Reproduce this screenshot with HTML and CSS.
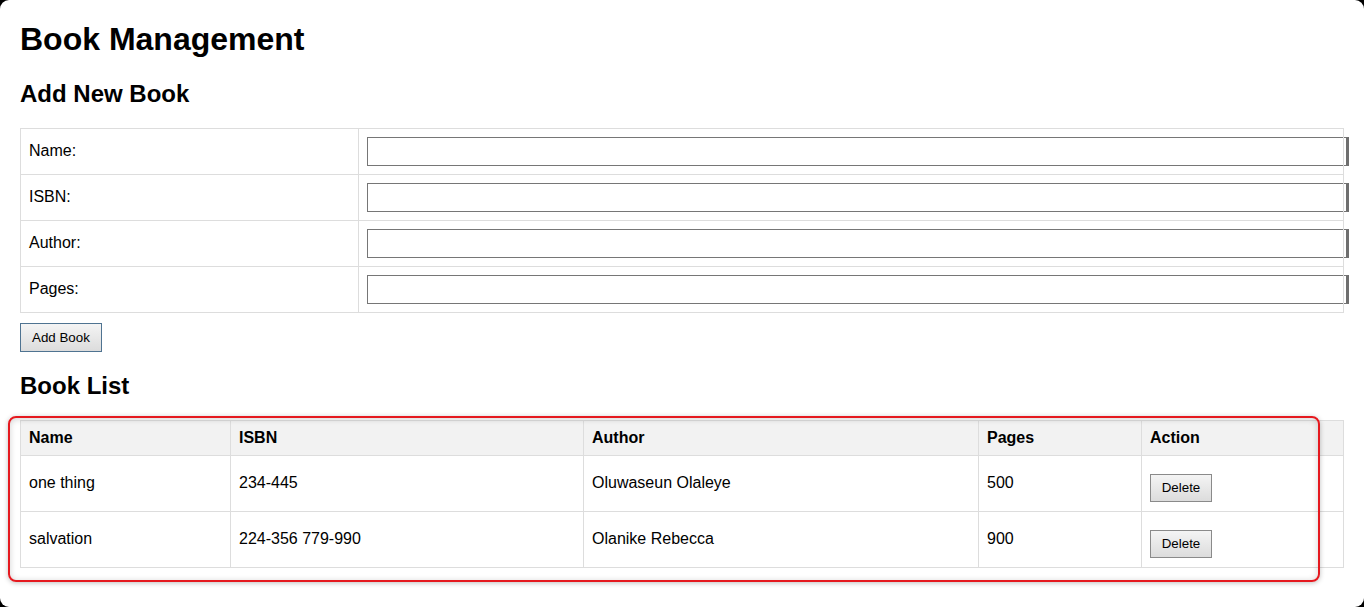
FILE: index.html
```html
<!DOCTYPE html>
<html lang="en">
<head>
<meta charset="utf-8">
<title>Book Management</title>
<link rel="stylesheet" href="styles.css">
</head>
<body>
<h1 class="page-title">Book Management</h1>

<h2 class="section-title">Add New Book</h2>
<form class="book-form">
  <table class="form-table">
    <colgroup>
      <col class="col-label">
      <col class="col-input">
    </colgroup>
    <tr>
      <td class="cell"><label for="name">Name:</label></td>
      <td class="cell"><input class="text-input" id="name" type="text"></td>
    </tr>
    <tr>
      <td class="cell"><label for="isbn">ISBN:</label></td>
      <td class="cell"><input class="text-input" id="isbn" type="text"></td>
    </tr>
    <tr>
      <td class="cell"><label for="author">Author:</label></td>
      <td class="cell"><input class="text-input" id="author" type="text"></td>
    </tr>
    <tr>
      <td class="cell"><label for="pages">Pages:</label></td>
      <td class="cell"><input class="text-input" id="pages" type="text"></td>
    </tr>
  </table>
  <button class="btn btn-add" type="button">Add Book</button>
</form>

<h2 class="section-title">Book List</h2>
<div class="list-wrap">
  <table class="book-table">
    <colgroup>
      <col class="col-name">
      <col class="col-isbn">
      <col class="col-author">
      <col class="col-pages">
      <col class="col-action">
    </colgroup>
    <thead>
      <tr>
        <th class="head-cell">Name</th>
        <th class="head-cell">ISBN</th>
        <th class="head-cell">Author</th>
        <th class="head-cell">Pages</th>
        <th class="head-cell">Action</th>
      </tr>
    </thead>
    <tbody>
      <tr>
        <td class="body-cell">one thing</td>
        <td class="body-cell">234-445</td>
        <td class="body-cell">Oluwaseun Olaleye</td>
        <td class="body-cell">500</td>
        <td class="body-cell"><button class="btn btn-delete" type="button">Delete</button></td>
      </tr>
      <tr>
        <td class="body-cell">salvation</td>
        <td class="body-cell">224-356 779-990</td>
        <td class="body-cell">Olanike Rebecca</td>
        <td class="body-cell">900</td>
        <td class="body-cell"><button class="btn btn-delete" type="button">Delete</button></td>
      </tr>
    </tbody>
  </table>
  <div class="highlight"></div>
</div>

<div class="window-frame"></div>
</body>
</html>
```

FILE: styles.css
```css
html {
  background: #ffffff;
}

body {
  margin: 0;
  padding: 0 20px 20px;
  font-family: "Liberation Sans", Arial, sans-serif;
  font-size: 16px;
  color: #000;
  background: #ffffff;
}

.page-title {
  font-size: 32px;
  font-weight: bold;
  margin: 21.44px 0;
}

.section-title {
  font-size: 24px;
  font-weight: bold;
  margin: 19.92px 0;
}

.book-form {
  margin: 0;
}

.form-table,
.book-table {
  width: 100%;
  border-collapse: collapse;
  table-layout: fixed;
}

.col-label { width: 338px; }

.cell {
  border: 1px solid #dddddd;
  padding: 8px;
  text-align: left;
  vertical-align: middle;
  overflow: visible;
}

.text-input {
  display: block;
  box-sizing: border-box;
  width: calc(100% + 14px);
  height: 29px;
  padding: 6px;
  margin: 0;
  border: 1px solid #767676;
  border-right: 3px solid #6e6e6e;
  font-family: "Liberation Sans", Arial, sans-serif;
  font-size: 13.33px;
  line-height: 15px;
  background: #fff;
  outline: none;
}

.btn {
  font-family: "Liberation Sans", Arial, sans-serif;
  font-size: 13.33px;
  line-height: 15px;
  color: #000;
  background: linear-gradient(#f4f4f4, #dcdcdc);
  border: 1px solid #8a8a8a;
  border-radius: 0;
  cursor: pointer;
}

.btn-add {
  display: block;
  margin-top: 10px;
  padding: 6px 11px;
  height: 29px;
  border-color: #4f7391;
}

.btn-delete {
  display: inline-block;
  vertical-align: top;
  margin: 10px 0 1px;
  padding: 5px 10px;
  height: 28px;
  width: 62px;
}

.list-wrap {
  position: relative;
}

.col-name { width: 210px; }
.col-isbn { width: 353px; }
.col-author { width: 395px; }
.col-pages { width: 163px; }

.head-cell {
  border: 1px solid #dddddd;
  background: #f2f2f2;
  padding: 8px;
  text-align: left;
  font-weight: bold;
  height: 18px;
  line-height: 18px;
}

.body-cell {
  border: 1px solid #dddddd;
  padding: 8px;
  text-align: left;
  vertical-align: middle;
  height: 39px;
}

.highlight {
  position: absolute;
  left: -12px;
  top: -4px;
  width: 1308px;
  height: 162px;
  border: 2px solid #e5191f;
  border-radius: 8px;
  box-shadow: 0 1px 5px rgba(0, 0, 0, 0.25), inset 0 1px 6px rgba(0, 0, 0, 0.18);
  pointer-events: none;
}

.window-frame {
  position: fixed;
  inset: 0;
  border-radius: 9px;
  box-shadow: 0 0 0 20px #000;
  pointer-events: none;
}
```
